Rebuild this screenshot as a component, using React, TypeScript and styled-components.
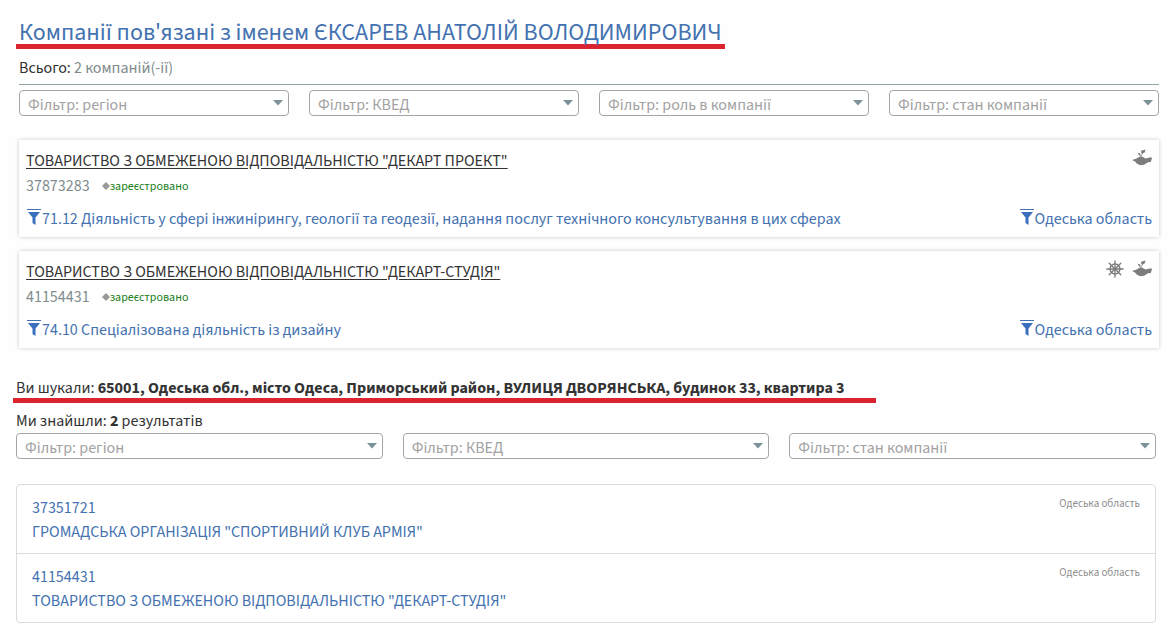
import React from 'react';
import styled, { createGlobalStyle } from 'styled-components';

const GlobalStyle = createGlobalStyle`
  * { box-sizing: border-box; }
  body {
    margin: 0;
    background: #fefefe;
    color: #333;
    font: 16px/24px 'Source Sans 3', 'Source Sans Pro', Roboto, sans-serif;
  }
  a { color: inherit; text-decoration: none; }
  h1, p, ul { margin: 0; padding: 0; }
  ul { list-style: none; }
`;

const Page = styled.main`
  padding: 22px 17px 11px 16px;
`;

const PersonSection = styled.section`
  padding-left: 3px;
`;

const AddressSection = styled.section`
  margin-top: 30px;
  padding-right: 3px;
`;

const Marked = styled.div<{ $overhang?: number }>`
  width: fit-content;
  max-width: 100%;
  margin-left: -3px;
  padding: 0 ${(p) => p.$overhang ?? 3}px 0 3px;
  border-bottom: 5px solid #dc2430;
`;

const Title = styled.h1`
  color: #4472b0;
  font-size: 24px;
  font-weight: 400;
  line-height: 22px;
`;

const Searched = styled.p`
  line-height: 20px;
`;

const Total = styled.p`
  padding: 7px 0 4px;
  border-bottom: 1px solid #93a5aa;
  margin-bottom: 5px;
`;

const Muted = styled.span`
  color: #7f8c8d;
`;

const Filters = styled.div`
  display: flex;
  gap: 20px;
`;

const FilterBox = styled.div`
  position: relative;
  flex: 1 1 0;
  min-width: 0;
`;

const FilterSelect = styled.select`
  display: block;
  width: 100%;
  height: 26px;
  padding: 4px 24px 0 8px;
  appearance: none;
  border: 1px solid #a3a6a7;
  border-radius: 4px;
  background: #fff;
  color: #a2a2a2;
  font: inherit;
  line-height: 20px;
`;

const Arrow = styled.svg`
  position: absolute;
  top: 10px;
  right: 6px;
  width: 10px;
  height: 6px;
  fill: #7b9298;
  pointer-events: none;
`;

const Cards = styled.div`
  display: flex;
  flex-direction: column;
  gap: 14px;
  margin-top: 24px;
`;

const Card = styled.article`
  padding: 9px 7px 6px;
  background: #fff;
  box-shadow: 0 0 4px rgba(0, 0, 0, 0.22);
`;

const CardRow = styled.div`
  display: flex;
  justify-content: space-between;
`;

const CompanyLink = styled.a`
  && { text-decoration: underline; }
  text-underline-offset: 2px;
`;

const Icons = styled.div`
  display: flex;
  gap: 8px;
  color: #7c7c7c;
`;

const Code = styled.div`
  display: flex;
  align-items: center;
  margin: 1px 0 9px;
  color: #7f8c8d;
`;

const Dot = styled.svg`
  width: 8px;
  height: 8px;
  margin-left: 12px;
  fill: #999;
`;

const Status = styled.span`
  padding-top: 2px;
  color: #18801c;
  font-size: 12px;
  line-height: 22px;
`;

const FilterLink = styled.a`
  display: flex;
  && { color: #4472b0; }
`;

const FunnelSvg = styled.svg`
  flex: none;
  width: 16px;
  height: 24px;
`;

const Found = styled.p`
  margin-top: 6px;
`;

const Results = styled.ul`
  margin-top: 25px;
  border: 1px solid #dcdcdc;
  border-radius: 4px;
  background: #fff;
`;

const Result = styled.li`
  display: flex;
  justify-content: space-between;
  padding: 11px 15px 9px;
  & + & { border-top: 1px solid #dcdcdc; }
`;

const ResultLink = styled.a`
  display: grid;
  && { color: #4472b0; }
`;

const Region = styled.span`
  color: #8e8e8e;
  font-size: 11px;
  line-height: 16px;
`;

const Filter = ({ label }: { label: string }) => (
  <FilterBox>
    <FilterSelect aria-label={label} defaultValue="">
      <option value="">{label}</option>
    </FilterSelect>
    <Arrow viewBox="0 0 10 6" aria-hidden="true"><path d="M0 0h10L5 5.500z" /></Arrow>
  </FilterBox>
);

const Funnel = () => (
  <FunnelSvg viewBox="0 0 16 24" aria-hidden="true">
    <path d="M1 2.500h14" stroke="#4472b0" strokeWidth="1" />
    <path d="M2 5h12L9.500 10.500V18L6.500 16v-5.500z" fill="#3a6fbe" />
  </FunnelSvg>
);

const WheelIcon = () => (
  <svg width="18" height="18" viewBox="-9 -9 18 18" fill="none" stroke="currentColor" aria-hidden="true">
    <circle r="4.900" strokeWidth="1.500" />
    <circle r="1.600" fill="currentColor" stroke="none" />
    {[0, 45, 90, 135].map((a) => (
      <path key={a} d="M-8.200 0H8.200" strokeWidth="1.300" strokeLinecap="round" transform={`rotate(${a})`} />
    ))}
  </svg>
);

const HandIcon = () => (
  <svg width="20" height="18" viewBox="0 0 20 18" fill="currentColor" aria-hidden="true">
    <path d="M0 11l4-1.200L8 7.500l2.500.3 3 1.700L19 8.200l1 .8-1.200 4-2.800.3-4 2.500-3.500.5-3.500-1.500L3 12.500z" />
    <path d="M9 1.800L13.500.600 12.800 3.300 10.500 4.700 9.300 4z" />
    <path d="M5.500 3.800l2.300.4 1.200 2.300-1.500.2z" />
    <path d="M10.500 4L8.800 8" stroke="currentColor" strokeWidth=".7" />
  </svg>
);

const companies = [
  { name: 'ТОВАРИСТВО З ОБМЕЖЕНОЮ ВІДПОВІДАЛЬНІСТЮ "ДЕКАРТ ПРОЕКТ"', code: '37873283', activity: '71.12 Діяльність у сфері інжинірингу, геології та геодезії, надання послуг технічного консультування в цих сферах', head: false },
  { name: 'ТОВАРИСТВО З ОБМЕЖЕНОЮ ВІДПОВІДАЛЬНІСТЮ "ДЕКАРТ-СТУДІЯ"', code: '41154431', activity: '74.10 Спеціалізована діяльність із дизайну', head: true },
];

const results = [
  { code: '37351721', name: 'ГРОМАДСЬКА ОРГАНІЗАЦІЯ "СПОРТИВНИЙ КЛУБ АРМІЯ"' },
  { code: '41154431', name: 'ТОВАРИСТВО З ОБМЕЖЕНОЮ ВІДПОВІДАЛЬНІСТЮ "ДЕКАРТ-СТУДІЯ"' },
];

export default function App() {
  return (
    <>
      <GlobalStyle />
      <Page>
        <PersonSection>
          <Marked><Title>Компанії пов'язані з іменем ЄКСАРЕВ АНАТОЛІЙ ВОЛОДИМИРОВИЧ</Title></Marked>
          <Total>Всього: <Muted>2 компаній(-ії)</Muted></Total>
          <Filters>
            {['регіон', 'КВЕД', 'роль в компанії', 'стан компанії'].map((f) => <Filter key={f} label={`Фільтр: ${f}`} />)}
          </Filters>
          <Cards>
            {companies.map((c) => (
              <Card key={c.code}>
                <CardRow>
                  <CompanyLink href="#">{c.name}</CompanyLink>
                  <Icons>
                    {c.head && <WheelIcon />}
                    <HandIcon />
                  </Icons>
                </CardRow>
                <Code>
                  {c.code}
                  <Dot viewBox="0 0 8 8" aria-hidden="true"><path d="M4 0l4 4-4 4-4-4z" /></Dot>
                  <Status>зареєстровано</Status>
                </Code>
                <CardRow>
                  <FilterLink href="#"><Funnel />{c.activity}</FilterLink>
                  <FilterLink href="#"><Funnel />Одеська область</FilterLink>
                </CardRow>
              </Card>
            ))}
          </Cards>
        </PersonSection>
        <AddressSection>
          <Marked $overhang={31}>
            <Searched>Ви шукали: <b>65001, Одеська обл., місто Одеса, Приморський район, ВУЛИЦЯ ДВОРЯНСЬКА, будинок 33, квартира 3</b></Searched>
          </Marked>
          <Found>Ми знайшли: <b>2</b> результатів</Found>
          <Filters>
            {['регіон', 'КВЕД', 'стан компанії'].map((f) => <Filter key={f} label={`Фільтр: ${f}`} />)}
          </Filters>
          <Results>
            {results.map((r) => (
              <Result key={r.code}>
                <ResultLink href="#"><span>{r.code}</span><span>{r.name}</span></ResultLink>
                <Region>Одеська область</Region>
              </Result>
            ))}
          </Results>
        </AddressSection>
      </Page>
    </>
  );
}
